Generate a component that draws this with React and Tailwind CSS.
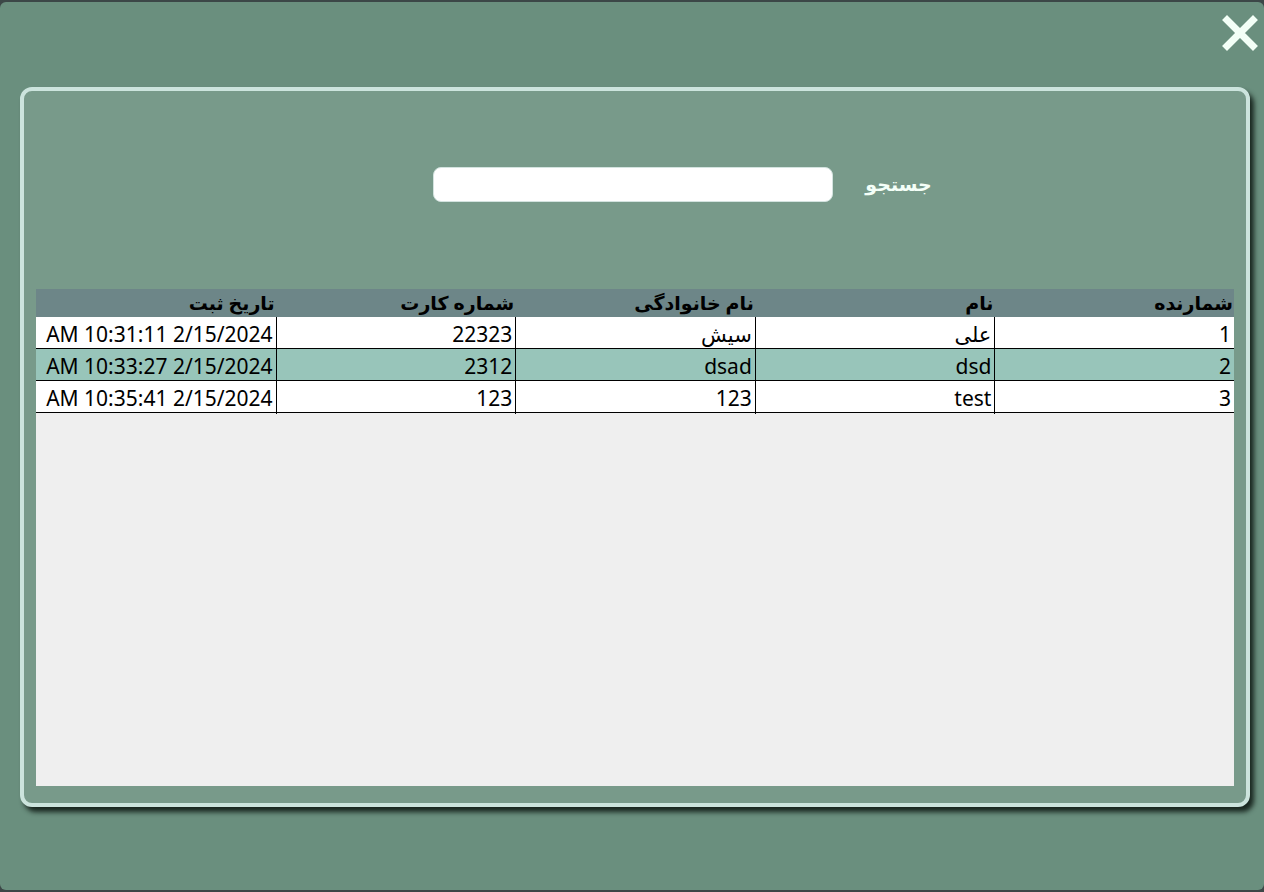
import React from "react";

const rows = [
  { id: "1", name: "علی", family: "سیش", card: "22323", date: "2/15/2024 10:31:11 AM" },
  { id: "2", name: "dsd", family: "dsad", card: "2312", date: "2/15/2024 10:33:27 AM" },
  { id: "3", name: "test", family: "123", card: "123", date: "2/15/2024 10:35:41 AM" },
];

const headers = ["شمارنده", "نام", "نام خانوادگی", "شماره کارت", "تاریخ ثبت"];

const CloseIcon = () => (
  <svg width="40" height="40" viewBox="0 0 40 40">
    <path d="M7 7 L33 33 M33 7 L7 33" stroke="#f3fff7" strokeWidth="7" strokeLinecap="square" />
  </svg>
);

export default function App() {
  return (
    <div
      className="w-[1264px] h-[892px] bg-[#3c4747] pt-[2px] overflow-hidden"
      style={{ fontFamily: '"Noto Sans", "DejaVu Sans", sans-serif' }}
    >
      <div className="h-[888px] rounded-md bg-[#6a8f7e] flex flex-col">
        {/* top bar with close */}
        <div className="h-[85px] flex justify-end items-start pt-[11px] pr-[4px]">
          <CloseIcon />
        </div>

        {/* panel */}
        <div className="mx-[20px] w-[1230px] h-[720px] rounded-xl border-4 border-[#cce4dd] bg-[#789a8a] shadow-[4px_5px_5px_rgba(10,20,15,0.85)] flex flex-col px-[12px] pb-[17px]">
          <div className="h-[198px] pt-[75px] flex justify-center pl-[95px]">
            <div dir="rtl" className="flex items-center gap-8 h-[36px]">
              <span className="text-[19px] font-bold text-[#f4fff8]">جستجو</span>
              <input
                type="text"
                className="w-[400px] h-[35px] rounded-lg bg-white border border-[#d3e3df] outline-none"
              />
            </div>
          </div>

          <div dir="rtl" className="flex-1 bg-[#efefef] flex flex-col text-black">
            <div className="grid grid-cols-5 h-[28px] bg-[#6d8688]">
              {headers.map((h) => (
                <div key={h} className="px-[1px] text-[19px] font-bold leading-[28px] text-right">
                  {h}
                </div>
              ))}
            </div>
            {rows.map((r, i) => (
              <div
                key={r.id}
                className={`grid grid-cols-5 h-[32px] border-b border-black ${
                  i === 1 ? "bg-[#98c5ba]" : "bg-white"
                }`}
              >
                {[r.id, r.name, r.family, r.card, r.date].map((c, j) => (
                  <div
                    key={j}
                    className={`pr-[3px] pt-[2px] text-[21px] leading-[31px] text-right ${
                      j < 4 ? "border-l border-black" : ""
                    }`}
                  >
                    {c}
                  </div>
                ))}
              </div>
            ))}
          </div>
        </div>
      </div>
    </div>
  );
}
